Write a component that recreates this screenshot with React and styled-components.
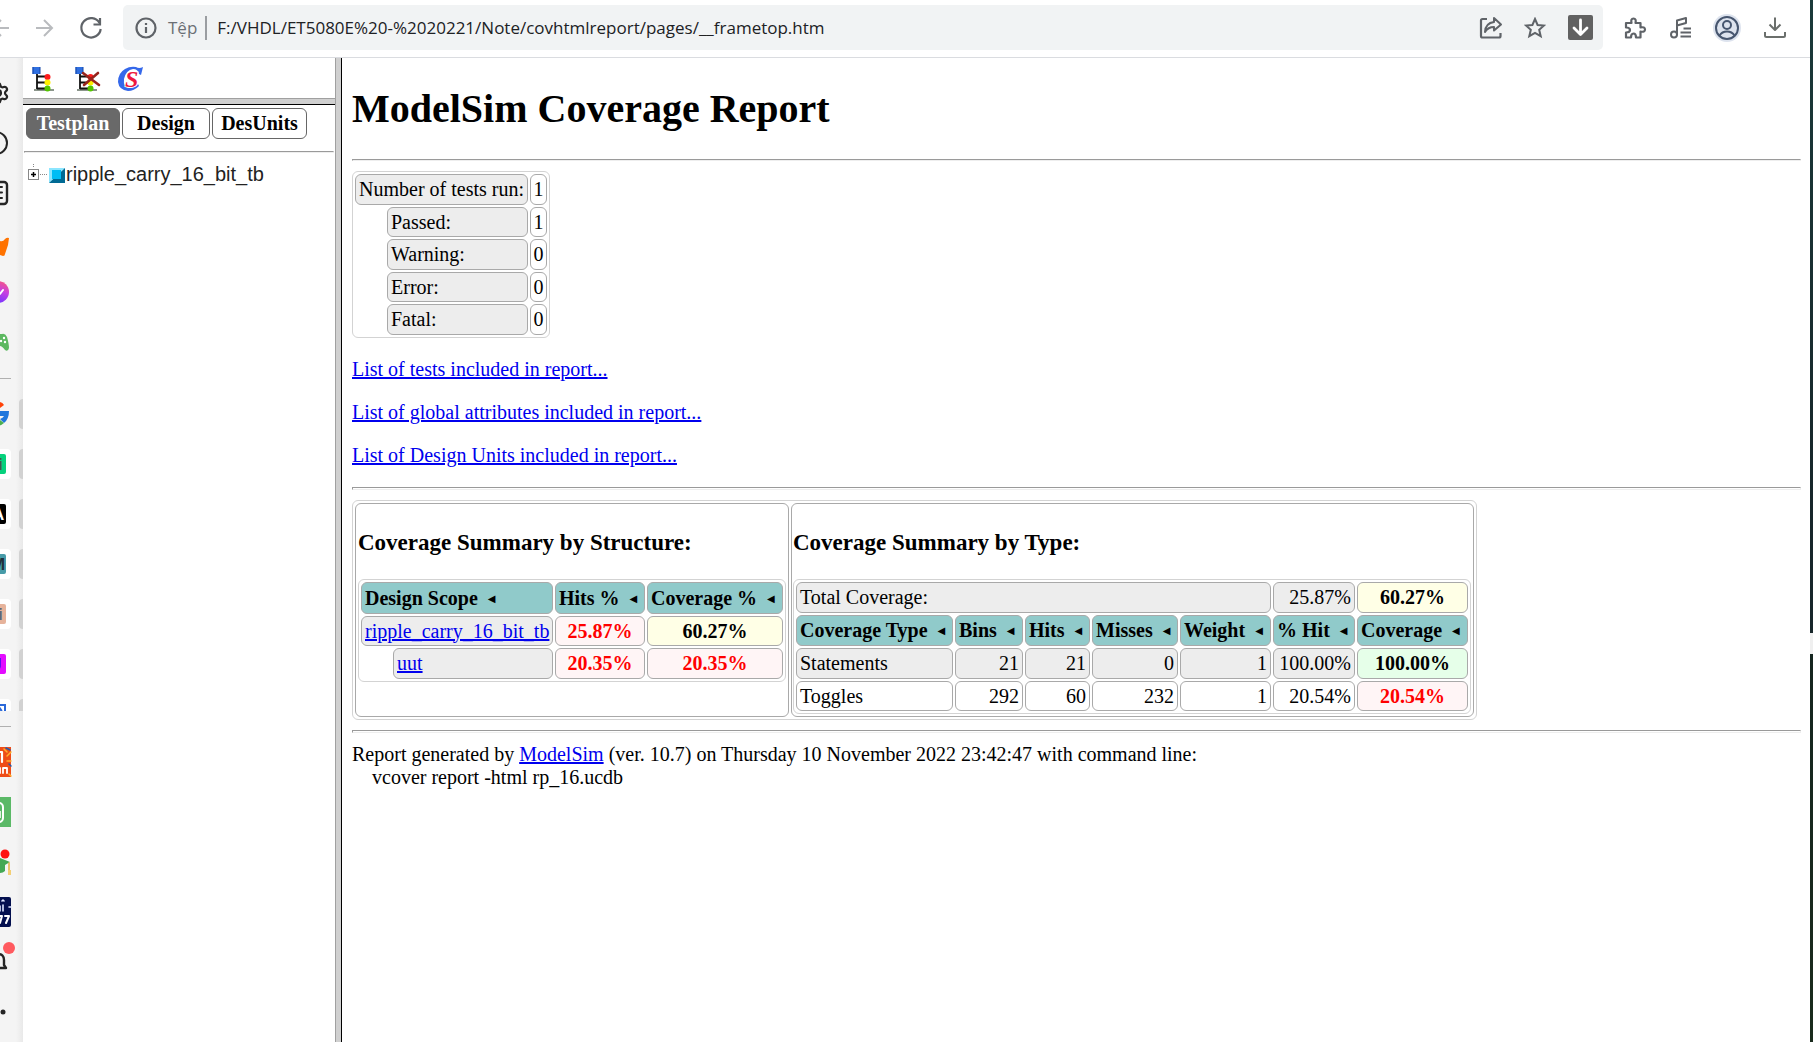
import React from "react";
import styled, { createGlobalStyle, css } from "styled-components";
import { Settings } from "lucide-react";

const serif = '"Liberation Serif", "Times New Roman", serif';
const sans = '"Liberation Sans", Arial, sans-serif';
const ui = '"Open Sans", "Noto Sans", sans-serif';

const GlobalStyle = createGlobalStyle`
  *, *::before, *::after { box-sizing: border-box; }
  body { margin: 0; background: #fff; color: #000; font: 20px/23px ${serif}; }
  a { color: #0000ee; }
`;

const Screen = styled.div`
  display: flex;
  min-height: 100vh;
`;
const Browser = styled.div`
  flex: 1;
  min-width: 0;
  display: flex;
  flex-direction: column;
`;
const Desktop = styled.div`
  width: 3px;
  background: linear-gradient(#1b3a3a 0, #17262a 500px, #17262a 633px, #efefef 633px, #efefef 654px, #15251f 654px, #1a2b1d 100%);
`;

/* ---- browser toolbar ---- */
const Toolbar = styled.header`
  display: flex;
  align-items: center;
  height: 58px;
  padding-bottom: 2px;
  border-bottom: 1px solid #dadce0;
`;
const IconButton = styled.button`
  display: grid;
  place-items: center;
  flex: none;
  width: ${(p) => p.$w || 46}px;
  height: 36px;
  padding: 0;
  border: 0;
  background: none;
  svg { display: block; }
`;
const AddressBar = styled.div`
  flex: 1;
  display: flex;
  align-items: center;
  height: 45px;
  margin-right: 9px;
  background: #f1f3f4;
  border-radius: 5px;
  font: 17px/24px ${ui};
`;
const Scheme = styled.label`
  padding: 0 8px 0 0;
  border-right: 2px solid #9a9da1;
  color: #6b6f74;
`;
const Url = styled.input`
  flex: 1;
  min-width: 0;
  margin-left: 10px;
  padding: 0;
  border: 0;
  background: none;
  color: #202124;
  font: inherit;
`;

/* ---- side rail ---- */
const Frames = styled.div`
  flex: 1;
  display: flex;
`;
const Rail = styled.nav`
  flex: none;
  width: 23px;
  padding-top: 9px;
  background: linear-gradient(to right, #f4f4f4 16px, #e9e9e9 23px);
`;
const RailGroup = styled.div`
  max-height: ${(p) => p.$max || 400}px;
  overflow: hidden;
`;
const RailLine = styled.hr`
  width: 11px;
  height: 1px;
  margin: ${(p) => p.$top}px 0 10px;
  border: 0;
  background: #b0b0b0;
`;
const RailButton = styled.button`
  display: block;
  width: 23px;
  height: 50px;
  padding: 0;
  border: 0;
  background: none;
  svg { display: block; }
`;

/* ---- navigation frame ---- */
const NavFrame = styled.aside`
  flex: none;
  width: 312px;
`;
const NavTools = styled.div`
  display: flex;
  gap: 16px;
  height: 40px;
  padding: 6px 8px;
`;
const ToolButton = styled.button`
  width: 27px;
  height: 28px;
  padding: 0;
  border: 0;
  background: none;
  svg { display: block; }
`;
const RowDivider = styled.div`
  height: 7px;
  background: #d0d0d0;
  border-top: 1px solid #a0a0a0;
  border-bottom: 1px solid #000;
`;
const ColumnDivider = styled.div`
  flex: none;
  width: 7px;
  background: #d0d0d0;
  border-left: 1px solid #a0a0a0;
  border-right: 1px solid #000;
`;
const Tabs = styled.div`
  display: flex;
  gap: 2px;
  padding: 3px 3px 12px;
`;
const Tab = styled.button`
  height: 31px;
  width: ${(p) => p.$w}px;
  padding: 0;
  border: 1px solid #666;
  border-radius: 6px;
  background: ${(p) => (p.$active ? "#696969" : "#fff")};
  color: ${(p) => (p.$active ? "#fff" : "#000")};
  font: bold 20px/23px ${serif};
`;
const Rule = styled.hr`
  height: ${(p) => (p.$tall ? 3 : 2)}px;
  margin: ${(p) => p.$gap || "0 0 10px"};
  border: 1px solid #9a9a9a;
  border-right-color: #eee;
  border-bottom-color: #eee;
`;
const Tree = styled.div`
  display: flex;
  align-items: center;
  padding: 0 4px;
  color: #222;
  font: 20px/23px ${sans};
  svg { flex: none; }
`;

/* ---- report frame ---- */
const Report = styled.main`
  flex: 1;
  min-width: 0;
  padding: 0 9px 0 10px;
`;
const Title = styled.h1`
  margin: 0;
  padding: 27px 0;
  font-size: 40px;
  line-height: 47px;
`;
const Heading = styled.h3`
  margin: 23px 0;
  font-size: 23px;
  line-height: 27px;
`;
const ReportLink = styled.p`
  margin: 20px 0;
`;
const Footer = styled.p`
  margin: 0;
`;
const Command = styled.span`
  display: block;
  padding-left: 20px;
`;

const Table = styled.table`
  border: 1px solid #d3d3d3;
  border-radius: 6px;
  border-collapse: separate;
  border-spacing: 2px;
  ${(p) => p.$w && css`table-layout: fixed; width: ${p.$w}px;`}
`;
const Col = styled.col`
  width: ${(p) => p.$w}px;
`;
const Row = styled.tr`
  height: ${(p) => p.$h || 31}px;
`;
const tones = {
  plain: "background: #fff;",
  grey: "background: #ededed;",
  yellow: "background: #ffffe6; font-weight: bold;",
  green: "background: #e6ffe9; font-weight: bold;",
  red: "background: #fff5f6; font-weight: bold; color: #ff0000;",
};
const cell = css`
  padding: 0 3px;
  border: 1px solid #a9a9a9;
  border-radius: 6px;
  white-space: nowrap;
`;
const Cell = styled.td`
  ${cell}
  text-align: ${(p) => p.$align || "left"};
  ${(p) => tones[p.$tone || "plain"]}
`;
const Count = styled(Cell)`
  padding: 0 2px;
`;
const Blank = styled.td`
  padding: 0;
`;
const Head = styled.th`
  ${cell}
  background: #90caca;
  text-align: left;
`;
const SortButton = styled.button`
  display: flex;
  align-items: center;
  gap: 10px;
  padding: 0;
  border: 0;
  background: none;
  color: #000;
  font: inherit;
`;
const Arrow = styled.span`
  font: 10px/23px "DejaVu Sans", sans-serif;
`;
const Panel = styled.td`
  padding: 2px;
  border: 1px solid #a9a9a9;
  border-radius: 6px;
  vertical-align: top;
  & + & { padding-left: 1px; }
`;

const SortHead = ({ children, span }) => (
  <Head scope="col" colSpan={span}>
    <SortButton type="button">
      {children}
      <Arrow aria-hidden="true">◀</Arrow>
    </SortButton>
  </Head>
);

const Slot = ({ name, children }) => (
  <RailButton type="button" aria-label={name}>
    <svg width="23" height="50" viewBox="0 0 23 50">{children}</svg>
  </RailButton>
);
const Handle = () => <rect x="19" y="10" width="10" height="30" rx="4" fill="#d2d2d2" />;
const SiteTile = ({ name, fill, ink, letter, x = -8 }) => (
  <Slot name={name}>
    <Handle />
    <rect x="-12" y="10" width="23" height="30" rx="4" fill="#fff" />
    <rect x="-12" y="15" width="18" height="20" rx="2" fill={fill} />
    <text x={x} y="31" fill={ink} fontSize="17" fontWeight="bold" fontFamily="Liberation Sans">{letter}</text>
  </Slot>
);

const stroke = (color, width = 2) => ({
  fill: "none",
  stroke: color,
  strokeWidth: width,
  strokeLinecap: "round",
  strokeLinejoin: "round",
});

const SideRail = () => (
  <Rail>
    <RailGroup>
      <Slot name="Settings"><Settings x={-14} y={14} size={24} color="#252525" strokeWidth={2.2} /></Slot>
      <Slot name="History"><circle cx="-4" cy="26" r="11" {...stroke("#252525")} /></Slot>
      <Slot name="Reading list">
        <rect x="-12" y="15" width="19" height="22" rx="3" {...stroke("#252525", 2.4)} />
        <path d="M-4 20h6M-4 25.500h6M-4 31h6" {...stroke("#252525")} />
      </Slot>
      <Slot name="Fox"><path d="M0 24Q3 25 5 22Q7 20 9 21L8 28L5 37Q5 39 3 39L0 38Z" fill="#ff7300" /></Slot>
      <Slot name="Messenger">
        <defs>
          <linearGradient id="chat" x1="1" y1="0" x2=".6" y2="1">
            <stop offset="0" stopColor="#ff5a70" />
            <stop offset=".5" stopColor="#c840e0" />
            <stop offset="1" stopColor="#7a35ff" />
          </linearGradient>
        </defs>
        <circle cx="-2" cy="25" r="11" fill="url(#chat)" />
        <path d="M-3 27l3 0l3-4" {...stroke("#fff", 2)} />
      </Slot>
      <Slot name="Games">
        <path d="M-8 17H2Q5 16 7 20Q9 27 9 31Q8 35 5 33Q2 29 0 29H-8Z" fill="#5cb860" />
        <circle cx="4" cy="21" r="1.200" fill="#fff" />
        <circle cx="1" cy="24" r="1.200" fill="#fff" />
        <circle cx="5" cy="25" r="1.200" fill="#fff" />
      </Slot>
    </RailGroup>
    <RailLine $top={11} />
    <RailGroup $max={322}>
      <Slot name="Google">
        <Handle />
        <path d="M-4 13Q2 12 4 16L0 19H-4Z" fill="#ff4208" />
        <path d="M-2 22H9Q9 30 4 34L0 30Q3 29 4 27H-2Z" fill="#1f76dc" />
        <path d="M0 31L4 34Q2 36 -2 37V31Z" fill="#4caf50" />
      </Slot>
      <SiteTile name="Site G" fill="#05d17c" ink="#3d5a4c" letter="i" x={-2} />
      <SiteTile name="Site A" fill="#000" ink="#fff" letter="A" />
      <SiteTile name="Site M" fill="#479ba8" ink="#20303a" letter="M" x={-9} />
      <SiteTile name="Site S" fill="#e6b39b" ink="#5d6577" letter="i" x={-2} />
      <SiteTile name="Site J" fill="#e30cff" ink="#1b1280" letter="J" />
      <Slot name="Site N">
        <Handle />
        <rect x="-12" y="10" width="23" height="30" rx="4" fill="#fff" />
        <path d="M0 16H5V36" fill="none" stroke="#2b68d8" strokeWidth="2" />
        <path d="M0 22V19L2 22" fill="none" stroke="#2b68d8" strokeWidth="1.500" />
      </Slot>
    </RailGroup>
    <RailLine $top={15} />
    <RailGroup>
      <Slot name="Sale">
        <rect y="10" width="11" height="30" fill="#ee4d18" />
        <path d="M4 12l3 3M7 19l4-4M7 24h4M9 37l2 2" {...stroke("#ffae2e", 1.5)} />
        <path d="M6 11l4 2M9 27l2 2" {...stroke("#2c59a8", 1.5)} />
        <path d="M0 15h2v10" {...stroke("#fff", 2.2)} />
        <path d="M0 31v5M3 36v-5h4v5" {...stroke("#fff", 1.8)} />
      </Slot>
      <Slot name="Notes">
        <rect y="10" width="11" height="30" fill="#5bb967" />
        <rect x="-8" y="16" width="11" height="19" rx="4" {...stroke("#fff", 2)} />
        <path d="M-2 24v7h3v-7z" fill="#d9f2dc" />
      </Slot>
      <Slot name="School">
        <path d="M0 21L10 25L5 28V34Q3 36 0 36Z" fill="#43a854" />
        <path d="M9 26V33" {...stroke("#e3b341", 1.5)} />
        <path d="M8 33h3v5H8z" fill="#f3cf75" />
        <circle cx="5" cy="17" r="4.500" fill="#ff1212" />
      </Slot>
      <Slot name="Event">
        <rect x="-5" y="10" width="16" height="30" rx="2" fill="#04104f" />
        <path d="M0 19v5M3 18v6M2 14l1-1l1 1M9 20h2" {...stroke("#dfe6ff", 1.6)} />
        <path d="M0 29h2l-2 7M5 29h4l-3 7" {...stroke("#fff", 2)} />
      </Slot>
      <Slot name="Notifications">
        <path d="M-8 31H6L4 28V23Q4 17 -2 17" {...stroke("#252525", 2.4)} />
        <circle cx="9" cy="11" r="6" fill="#ff5a5f" />
      </Slot>
      <Slot name="More"><circle cx="3" cy="25" r="2.500" fill="#252525" /></Slot>
    </RailGroup>
  </Rail>
);

const TreeArt = ({ crossed }) => (
  <svg width="27" height="28" viewBox="0 0 27 28">
    <path d="M3 26h20" stroke="#8c968c" strokeWidth="2" />
    <path d="M6 8V25M6 12.500H16M6 18.500H16M6 24.500H16" fill="none" stroke="#111" strokeWidth="1.800" />
    <rect x="1.500" y="3" width="7.500" height="7" fill="#2f6fe0" />
    <path d="M2 3v7M9 3v7" stroke="#1546a6" />
    <circle cx="16.500" cy="13" r="3" fill="#ff1c1c" />
    <circle cx="16.500" cy="18.500" r="3" fill="#ffee00" />
    <circle cx="16.500" cy="24.500" r="3" fill="#54c400" />
    {crossed && <path d="M9 9L25 21M24 9L10 21" stroke="#97241c" strokeWidth="2.600" fill="none" strokeLinecap="round" />}
  </svg>
);

const BrowserToolbar = () => (
  <Toolbar>
    <IconButton type="button" aria-label="Back" $w={22}>
      <svg width="22" height="22" viewBox="0 0 22 22"><path d="M-7 11H9M1 3L-7 11L1 19" {...stroke("#b9bbbe")} strokeLinecap="butt" /></svg>
    </IconButton>
    <IconButton type="button" aria-label="Forward">
      <svg width="18" height="18" viewBox="0 0 18 18"><path d="M0 9H16M8 1L16 9L8 17" {...stroke("#b9bbbe")} strokeLinecap="butt" strokeLinejoin="miter" /></svg>
    </IconButton>
    <IconButton type="button" aria-label="Reload" $w={45}>
      <svg width="24" height="24" viewBox="0 0 24 24">
        <path d="M20.500 7A9.700 9.700 0 1 0 21.700 13" {...stroke("#5f6368", 2.2)} strokeLinecap="butt" />
        <path d="M21 2V8.500H14.500" {...stroke("#5f6368", 2.2)} strokeLinecap="butt" strokeLinejoin="miter" />
      </svg>
    </IconButton>
    <IconButton as="span" $w={10} />
    <AddressBar>
      <IconButton type="button" aria-label="Site information" $w={45}>
        <svg width="22" height="22" viewBox="0 0 22 22">
          <circle cx="11" cy="11" r="9.500" {...stroke("#5f6368", 2.2)} />
          <path d="M11 10v6M11 6v2" stroke="#5f6368" strokeWidth="2.200" />
        </svg>
      </IconButton>
      <Scheme htmlFor="address">Tệp</Scheme>
      <Url id="address" spellCheck="false" defaultValue="F:/VHDL/ET5080E%20-%2020221/Note/covhtmlreport/pages/__frametop.htm" />
      <IconButton type="button" aria-label="Share" $w={44}>
        <svg width="24" height="24" viewBox="0 0 24 24">
          <path d="M8 3H3.500Q2 3 2 4.500V20Q2 21.500 3.500 21.500H20Q21.500 21.500 21.500 20V17" {...stroke("#5f6368", 2.2)} strokeLinecap="butt" />
          <path d="M15 2L22 8.500L15 14.500V11Q9 11 6 16Q6.500 7 15 6Z" {...stroke("#5f6368", 2)} />
        </svg>
      </IconButton>
      <IconButton type="button" aria-label="Bookmark" $w={44}>
        <svg width="22" height="22" viewBox="0 0 22 22">
          <path d="M11 2L13.600 8L20 8.500L15.200 12.800L16.700 19.200L11 15.800L5.300 19.200L6.800 12.800L2 8.500L8.400 8Z" {...stroke("#5f6368")} strokeLinejoin="miter" />
        </svg>
      </IconButton>
      <IconButton type="button" aria-label="Save page" $w={46}>
        <svg width="25" height="25" viewBox="0 0 25 25">
          <rect width="25" height="25" rx="2" fill="#616161" />
          <path d="M12.500 5V19M6 13L12.500 19.500L19 13" {...stroke("#fff", 2.8)} />
        </svg>
      </IconButton>
    </AddressBar>
    <IconButton type="button" aria-label="Extensions">
      <svg width="24" height="24" viewBox="0 0 24 24">
        <path d="M3 7H8.500Q7.500 2.500 10.500 2.500T12.500 7H17.500V11.500Q22 10.500 22 13.500T17.500 15.500V21.500H13Q13 17.500 10.500 17.500T8 21.500H3V16.500Q7 16.500 7 14T3 11.500Z" {...stroke("#5f6368", 2.2)} />
      </svg>
    </IconButton>
    <IconButton type="button" aria-label="Media">
      <svg width="24" height="24" viewBox="0 0 24 24">
        <circle cx="5" cy="18.500" r="3" {...stroke("#5f6368")} />
        <path d="M8 18.500V4.500L17 2V7L8 9.500" {...stroke("#5f6368")} />
        <path d="M14.500 12.500H22M11.500 16.500H22M11.500 20.500H22" {...stroke("#5f6368")} strokeLinecap="butt" />
      </svg>
    </IconButton>
    <IconButton type="button" aria-label="Profile">
      <svg width="28" height="28" viewBox="0 0 28 28">
        <circle cx="14" cy="14" r="14" fill="#dde3ee" />
        <circle cx="14" cy="14" r="11" {...stroke("#47566f")} />
        <circle cx="14" cy="11" r="4" {...stroke("#47566f")} />
        <path d="M6.500 21.500Q9 17.500 14 17.500T21.500 21.500" {...stroke("#47566f")} />
      </svg>
    </IconButton>
    <IconButton type="button" aria-label="Downloads" $w={50}>
      <svg width="24" height="24" viewBox="0 0 24 24">
        <path d="M12 1.500V13.500M6.500 8.500L12 14L17.500 8.500" {...stroke("#6b6f6c")} strokeLinecap="butt" />
        <path d="M2 16V19.500Q2 21 3.500 21H20.500Q22 21 22 19.500V16" {...stroke("#6b6f6c")} strokeLinecap="butt" />
      </svg>
    </IconButton>
    <IconButton as="span" $w={10} />
  </Toolbar>
);

const results = [
  ["Passed:", 1],
  ["Warning:", 0],
  ["Error:", 0],
  ["Fatal:", 0],
];
const types = [
  { name: "Statements", values: [21, 21, 0, 1, "100.00%"], total: "100.00%", tone: "grey", totalTone: "green" },
  { name: "Toggles", values: [292, 60, 232, 1, "20.54%"], total: "20.54%", tone: "plain", totalTone: "red" },
];

export default function App() {
  return (
    <Screen>
      <GlobalStyle />
      <Browser>
        <BrowserToolbar />
        <Frames>
          <SideRail />
          <NavFrame>
            <NavTools>
              <ToolButton type="button" aria-label="Show coverage tree"><TreeArt /></ToolButton>
              <ToolButton type="button" aria-label="Hide coverage tree"><TreeArt crossed /></ToolButton>
              <ToolButton type="button" aria-label="ModelSim">
                <svg width="27" height="28" viewBox="0 0 27 28">
                  <path d="M26 3L24 11L22 10Q21 5 16 5Q9 6 7 15Q6 23 12 24Q17 24 21 20L22 22Q17 27 11 27Q2 26 1 18Q1 9 8 5Q13 2 19 3Q22 5 26 3Z" fill="#3568ea" />
                  <text x="8" y="23" fill="#ee1840" stroke="#fff" strokeWidth="2" paintOrder="stroke" fontSize="24" fontWeight="bold" fontStyle="italic" fontFamily="Liberation Serif">S</text>
                </svg>
              </ToolButton>
            </NavTools>
            <RowDivider />
            <Tabs>
              <Tab type="button" $w={94} $active>Testplan</Tab>
              <Tab type="button" $w={88}>Design</Tab>
              <Tab type="button" $w={95}>DesUnits</Tab>
            </Tabs>
            <Rule $gap="0 1px 9px" />
            <Tree>
              <svg width="39" height="24" viewBox="0 0 39 24">
                <path d="M6.500 2v4M13 12.500h8" stroke="#888" strokeDasharray="1 1" />
                <rect x="1.500" y="7.500" width="10" height="10" fill="#fff" stroke="#888" />
                <path d="M4 12.500h5M6.500 10v5" stroke="#000" strokeWidth="1.500" />
                <path d="M22 6H38L22 21Z" fill="#8ce6ff" />
                <path d="M38 6V21H22Z" fill="#006a94" />
                <rect x="25" y="8" width="9" height="9" fill="#00bdf5" />
              </svg>
              ripple_carry_16_bit_tb
            </Tree>
          </NavFrame>
          <ColumnDivider />
          <Report>
            <Title>ModelSim Coverage Report</Title>
            <Rule />
            <Table $w={198}>
              <colgroup><Col $w={30} /><Col $w={141} /><Col $w={17} /></colgroup>
              <tbody>
                <Row>
                  <Cell $tone="grey" colSpan={2}>Number of tests run:</Cell>
                  <Count $align="center">1</Count>
                </Row>
                {results.map(([label, count], i) => (
                  <Row key={label} $h={i % 2 ? 31 : 30}>
                    <Blank />
                    <Cell $tone="grey">{label}</Cell>
                    <Count $align="center">{count}</Count>
                  </Row>
                ))}
              </tbody>
            </Table>
            <ReportLink><a href="#tests">List of tests included in report...</a></ReportLink>
            <ReportLink><a href="#attributes">List of global attributes included in report...</a></ReportLink>
            <ReportLink><a href="#units">List of Design Units included in report...</a></ReportLink>
            <Rule $tall />
            <Table>
              <tbody>
                <tr>
                  <Panel>
                    <Heading>Coverage Summary by Structure:</Heading>
                    <Table $w={428}>
                      <colgroup><Col $w={30} /><Col $w={160} /><Col $w={90} /><Col $w={136} /></colgroup>
                      <thead>
                        <Row $h={32}>
                          <SortHead span={2}>Design Scope</SortHead>
                          <SortHead>Hits %</SortHead>
                          <SortHead>Coverage %</SortHead>
                        </Row>
                      </thead>
                      <tbody>
                        <Row $h={30}>
                          <Cell $tone="grey" colSpan={2}><a href="#tb">ripple_carry_16_bit_tb</a></Cell>
                          <Cell $tone="red" $align="center">25.87%</Cell>
                          <Cell $tone="yellow" $align="center">60.27%</Cell>
                        </Row>
                        <Row>
                          <Blank />
                          <Cell $tone="grey"><a href="#uut">uut</a></Cell>
                          <Cell $tone="red" $align="center">20.35%</Cell>
                          <Cell $tone="red" $align="center">20.35%</Cell>
                        </Row>
                      </tbody>
                    </Table>
                  </Panel>
                  <Panel>
                    <Heading>Coverage Summary by Type:</Heading>
                    <Table $w={678}>
                      <colgroup>
                        {[157, 68, 65, 86, 91, 82, 111].map((w) => <Col key={w} $w={w} />)}
                      </colgroup>
                      <tbody>
                        <Row>
                          <Cell $tone="grey" colSpan={5}>Total Coverage:</Cell>
                          <Cell $tone="grey" $align="right">25.87%</Cell>
                          <Cell $tone="yellow" $align="center">60.27%</Cell>
                        </Row>
                        <Row>
                          {["Coverage Type", "Bins", "Hits", "Misses", "Weight", "% Hit", "Coverage"].map((h) => (
                            <SortHead key={h}>{h}</SortHead>
                          ))}
                        </Row>
                        {types.map((t, i) => (
                          <Row key={t.name} $h={31 - i}>
                            <Cell $tone={t.tone}>{t.name}</Cell>
                            {t.values.map((v, n) => <Cell key={n} $tone={t.tone} $align="right">{v}</Cell>)}
                            <Cell $tone={t.totalTone} $align="center">{t.total}</Cell>
                          </Row>
                        ))}
                      </tbody>
                    </Table>
                  </Panel>
                </tr>
              </tbody>
            </Table>
            <Rule $tall $gap="10px 0" />
            <Footer>
              Report generated by <a href="#modelsim">ModelSim</a> (ver. 10.7) on Thursday 10 November 2022 23:42:47 with command line:
              <Command>vcover report -html rp_16.ucdb</Command>
            </Footer>
          </Report>
        </Frames>
      </Browser>
      <Desktop />
    </Screen>
  );
}
